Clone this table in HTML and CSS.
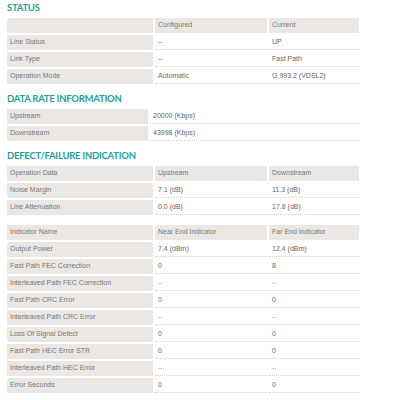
FILE: index.html
```html
<!DOCTYPE html>
<html>
<head>
<meta charset="utf-8">
<link rel="stylesheet" href="styles.css">
</head>
<body>
<div class="page">
  <h2 class="title first">STATUS</h2>
  <table class="tbl">
    <colgroup><col class="c-label"><col class="c-mid"><col class="c-last"></colgroup>
    <tr><td class="g"></td><td class="g">Configured</td><td class="g">Current</td></tr>
    <tr><td class="g">Line Status</td><td class="v">--</td><td class="v">UP</td></tr>
    <tr><td class="g">Link Type</td><td class="v">--</td><td class="v">Fast Path</td></tr>
    <tr><td class="g">Operation Mode</td><td class="v">Automatic</td><td class="v">G.993.2 (VDSL2)</td></tr>
  </table>

  <h2 class="title">DATA RATE INFORMATION</h2>
  <table class="tbl">
    <colgroup><col class="c-label2"><col class="c-val2"></colgroup>
    <tr><td class="g">Upstream</td><td class="v">20000 (Kbps)</td></tr>
    <tr><td class="g">Downstream</td><td class="v">43998 (Kbps)</td></tr>
  </table>

  <h2 class="title">DEFECT/FAILURE INDICATION</h2>
  <table class="tbl">
    <colgroup><col class="c-label"><col class="c-mid"><col class="c-last"></colgroup>
    <tr><td class="g">Operation Data</td><td class="g">Upstream</td><td class="g">Downstream</td></tr>
    <tr><td class="g">Noise Margin</td><td class="v">7.1 (dB)</td><td class="v">11.3 (dB)</td></tr>
    <tr><td class="g">Line Attenuation</td><td class="v">0.0 (dB)</td><td class="v">17.8 (dB)</td></tr>
  </table>

  <table class="tbl second">
    <colgroup><col class="c-label"><col class="c-mid"><col class="c-last"></colgroup>
    <tr><td class="g">Indicator Name</td><td class="g">Near End Indicator</td><td class="g">Far End Indicator</td></tr>
    <tr><td class="g">Output Power</td><td class="v">7.4 (dBm)</td><td class="v">12.4 (dBm)</td></tr>
    <tr><td class="g">Fast Path FEC Correction</td><td class="v">0</td><td class="v">8</td></tr>
    <tr><td class="g">Interleaved Path FEC Correction</td><td class="v dim">--</td><td class="v dim">--</td></tr>
    <tr><td class="g">Fast Path CRC Error</td><td class="v">0</td><td class="v">0</td></tr>
    <tr><td class="g">Interleaved Path CRC Error</td><td class="v dim">--</td><td class="v dim">--</td></tr>
    <tr><td class="g">Loss Of Signal Defect</td><td class="v">0</td><td class="v">0</td></tr>
    <tr><td class="g">Fast Path HEC Error STR</td><td class="v">0</td><td class="v">0</td></tr>
    <tr><td class="g">Interleaved Path HEC Error</td><td class="v dim">--</td><td class="v dim">--</td></tr>
    <tr><td class="g">Error Seconds</td><td class="v">0</td><td class="v">0</td></tr>
  </table>
</div>
</body>
</html>
```
FILE: styles.css
```css
html, body {
  margin: 0;
  padding: 0;
  background: #ffffff;
}

.page {
  padding-left: 5px;
  width: 354px;
}

.title {
  margin: 6px 0 1px 2px;
  font-family: Lato, "Open Sans", sans-serif;
  font-weight: 700;
  font-size: 9.5px;
  line-height: 14px;
  color: #1d9f9c;
  letter-spacing: -0.25px;
}

.title.first {
  margin-top: 1px;
}

.tbl {
  width: 354px;
  border-collapse: separate;
  border-spacing: 2px;
  table-layout: fixed;
  font-family: "Liberation Sans", Arial, sans-serif;
  font-size: 7px;
  color: #777777;
}

.tbl.second {
  margin-top: 6px;
}

.c-label { width: 146px; }
.c-mid { width: 112px; }
.c-last { width: 90px; }
.c-label2 { width: 141px; }
.c-val2 { width: 209px; }

.tbl td {
  height: 14px;
  padding: 0 0 0 3px;
  line-height: 14px;
  vertical-align: middle;
  white-space: nowrap;
  overflow: hidden;
  box-sizing: border-box;
}

.tbl td.g {
  height: 15px;
  background: #ebe7e4;
  border-bottom: 1px solid #ebe7e4;
}

.tbl td.v {
  height: 15px;
  background: #ffffff;
  color: #666666;
  border-bottom: 1px dotted #cfcfcf;
}

.tbl td.dim {
  color: #aaaaaa;
}
```
